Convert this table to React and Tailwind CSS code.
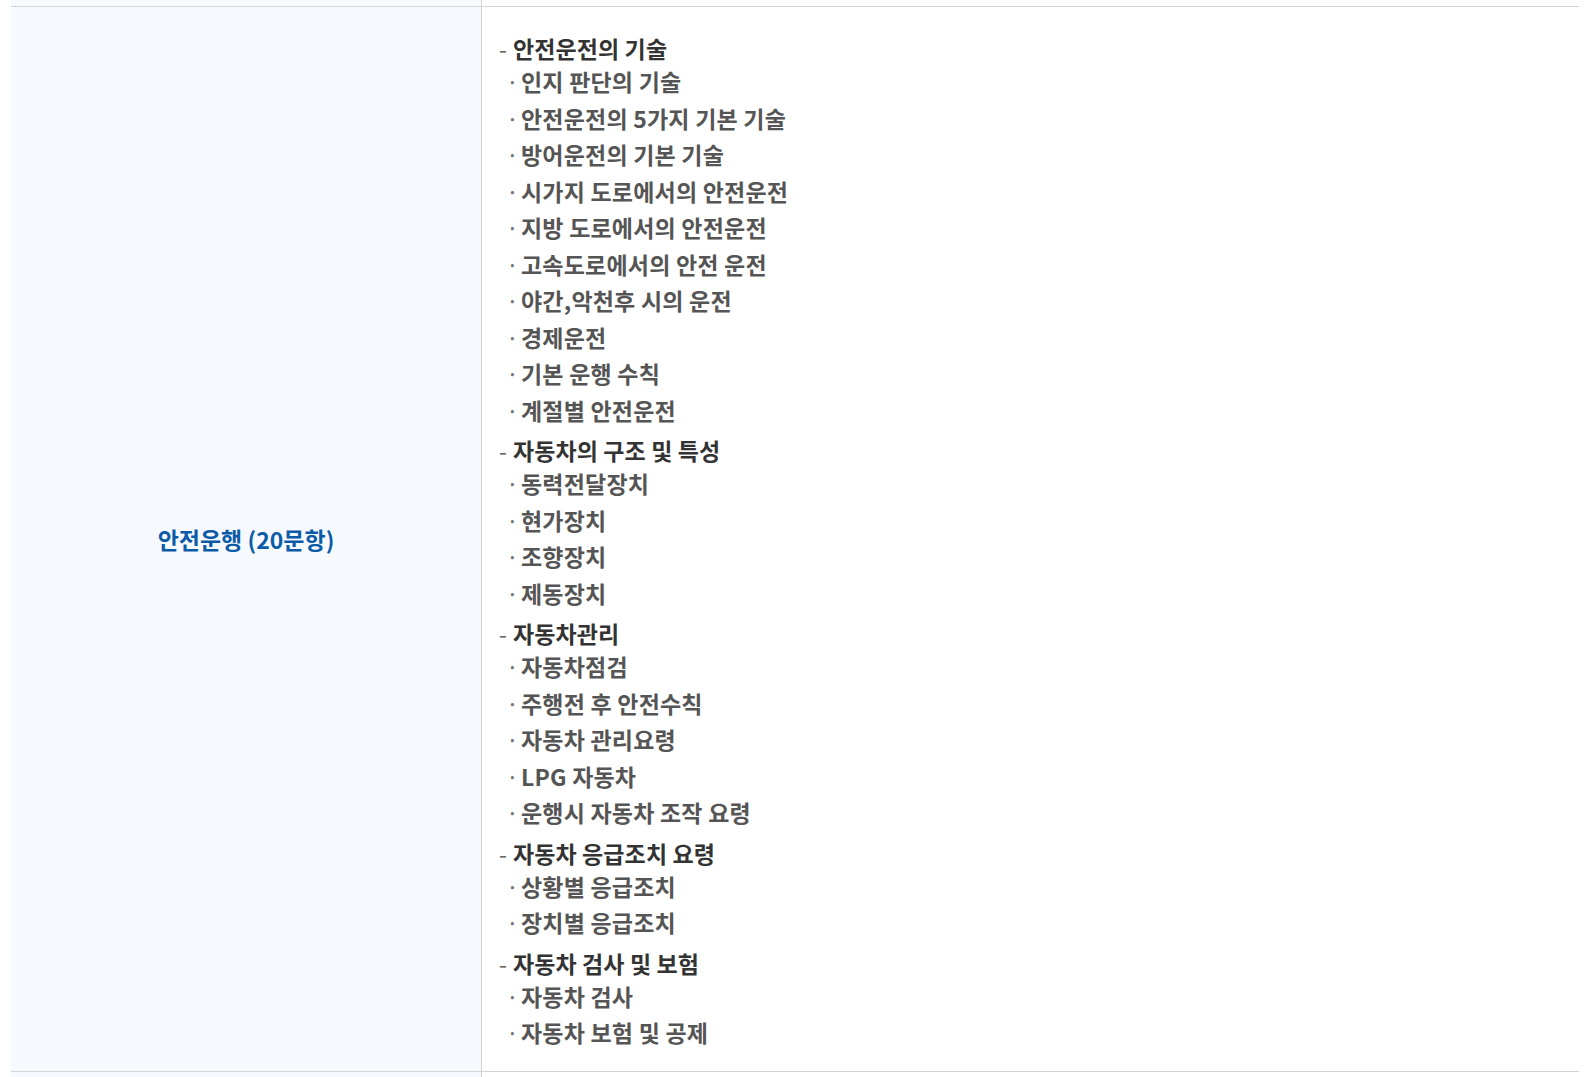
import React from 'react';

const sections = [
  {
    title: '안전운전의 기술',
    items: [
      '인지 판단의 기술',
      '안전운전의 5가지 기본 기술',
      '방어운전의 기본 기술',
      '시가지 도로에서의 안전운전',
      '지방 도로에서의 안전운전',
      '고속도로에서의 안전 운전',
      '야간,악천후 시의 운전',
      '경제운전',
      '기본 운행 수칙',
      '계절별 안전운전',
    ],
  },
  {
    title: '자동차의 구조 및 특성',
    items: ['동력전달장치', '현가장치', '조향장치', '제동장치'],
  },
  {
    title: '자동차관리',
    items: ['자동차점검', '주행전 후 안전수칙', '자동차 관리요령', 'LPG 자동차', '운행시 자동차 조작 요령'],
  },
  {
    title: '자동차 응급조치 요령',
    items: ['상황별 응급조치', '장치별 응급조치'],
  },
  {
    title: '자동차 검사 및 보험',
    items: ['자동차 검사', '자동차 보험 및 공제'],
  },
];

const font = { fontFamily: '"Noto Sans CJK KR", "Noto Sans", sans-serif' };

export default function App() {
  return (
    <div className="min-h-screen bg-white" style={font}>
      <div className="ml-[11px] w-[1568px]">
        {/* previous row (cut off) */}
        <div className="flex h-[7px] border-b border-[#d4d4d4]">
          <div className="w-[470px] bg-[#f6faff]" />
          <div className="flex-1 border-l border-[#d4d4d4]" />
        </div>

        {/* 안전운행 row */}
        <div className="flex border-b border-[#d4d4d4]">
          <div className="w-[470px] bg-[#f6faff] flex items-center justify-center">
            <span className="text-[23px] font-bold text-[#0c5ba8]">안전운행 (20문항)</span>
          </div>
          <div className="flex-1 border-l border-[#d4d4d4] pl-[17px] pt-[26px] pb-[20px]">
            {sections.map((s, i) => (
              <div key={s.title} className={i > 0 ? 'mt-[7px]' : ''}>
                <p className="text-[23px] leading-[30px] font-bold text-[#333] whitespace-nowrap tracking-[0.1px]">
                  <span className="inline-block w-[14px] font-normal text-[#666]">-</span>
                  {s.title}
                </p>
                <ul>
                  {s.items.map(item => (
                    <li key={item} className="pl-[7px] text-[23px] leading-[36.5px] font-bold text-[#555] whitespace-nowrap tracking-[0.2px]">
                      <span className="inline-block w-[15px] font-normal text-[#777]">·</span>
                      {item}
                    </li>
                  ))}
                </ul>
              </div>
            ))}
          </div>
        </div>

        {/* next row (cut off) */}
        <div className="flex h-[6px]">
          <div className="w-[470px] bg-[#f6faff]" />
          <div className="flex-1 border-l border-[#d4d4d4]" />
        </div>
      </div>
    </div>
  );
}
